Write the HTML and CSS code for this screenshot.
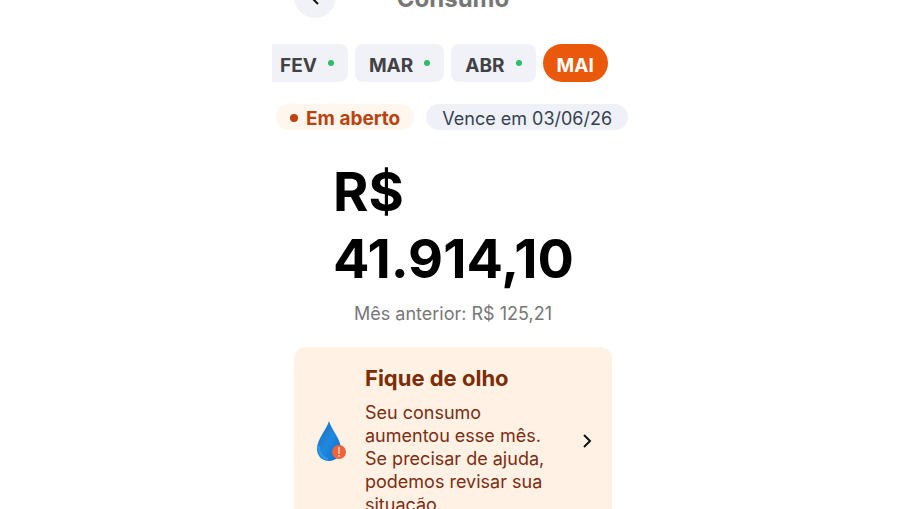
FILE: index.html
```
<!DOCTYPE html>
<html lang="pt-BR">
  <head>
    <meta charset="utf-8" />
    <meta name="viewport" content="width=device-width, initial-scale=1" />
    <title>Consumo</title>
    <link rel="stylesheet" href="styles.css">
  </head>
  <body>
    <main class="screen">
      <header class="header">
        <button class="back-btn" aria-label="Voltar">
          <svg width="20" height="20" viewBox="0 0 20 20" fill="none" stroke="#111" stroke-width="2">
            <path d="M13 3L6 10L13 17" />
          </svg>
        </button>
        <h1>Consumo</h1>
      </header>

      <nav class="months">
        <button class="month month-first">FEV <span class="dot"></span></button>
        <button class="month">MAR <span class="dot"></span></button>
        <button class="month">ABR <span class="dot"></span></button>
        <button class="month active">MAI</button>
      </nav>

      <div class="badges">
        <span class="badge badge-open"><span class="dot"></span>Em aberto</span>
        <span class="badge badge-due">Vence em 03/06/26</span>
      </div>

      <section class="bill">
        <p class="amount">R$<br>41.914,10</p>
        <p class="previous">Mês anterior: R$ 125,21</p>
      </section>

      <a class="alert-card" href="#">
        <svg class="drop" width="32" height="42" viewBox="0 0 32 42">
          <defs>
            <linearGradient id="water" x1="0" y1="0" x2="1" y2="1">
              <stop offset="0" stop-color="#1769b5" />
              <stop offset="0.5" stop-color="#2088de" />
              <stop offset="1" stop-color="#0b6ed0" />
            </linearGradient>
          </defs>
          <path d="M13 1C11 9 1 19 1 29C1 36 6 41 13 41C20 41 25 36 25 29C25 19 15 9 13 1Z" fill="url(#water)" />
          <path d="M3 27C3 33 6 37 11 39" fill="none" stroke="#2f9bea" stroke-width="2" stroke-linecap="round" />
          <circle cx="23" cy="32" r="7" fill="#ee6339" />
          <path d="M23 27V34M23 35V37" stroke="#fff" stroke-width="1" />
        </svg>
        <div class="alert-text">
          <h2>Fique de olho</h2>
          <p>Seu consumo<br>aumentou esse mês.<br>Se precisar de ajuda,<br>podemos revisar sua<br>situação.</p>
        </div>
        <svg class="chevron" width="10" height="14" viewBox="0 0 10 14" fill="none" stroke="#111" stroke-width="2">
          <path d="M2 1L8 7L2 13" />
        </svg>
      </a>
    </main>
  </body>
</html>
```
FILE: styles.css
```
* {
  box-sizing: border-box;
}
body {
  margin: 0;
  background: #fff;
  font-family: Inter, "Open Sans", sans-serif;
  overflow: hidden;
}
h1,
h2,
p {
  margin: 0;
}
button {
  border: none;
  font-family: inherit;
  cursor: pointer;
}
.screen {
  max-width: 362px;
  margin: 0 auto;
}
.header {
  display: grid;
  grid-template-columns: 42px 1fr 42px;
  align-items: center;
  margin-top: -24px;
  padding: 0 22px;
}
.header h1 {
  padding-top: 4px;
  font-size: 24px;
  line-height: 38px;
  text-align: center;
  color: #777;
}
.back-btn {
  display: flex;
  align-items: center;
  justify-content: center;
  height: 42px;
  padding: 0;
  border-radius: 50%;
  background: #f0f2f8;
}
.months {
  display: flex;
  gap: 7px;
  margin-top: 26px;
}
.month {
  display: flex;
  align-items: center;
  gap: 11px;
  height: 38px;
  padding: 4px 14px 0;
  border-radius: 8px;
  background: #f0f2f8;
  color: #414146;
  font-size: 19px;
  font-weight: 700;
}
.month-first {
  padding-left: 8px;
  border-radius: 0 8px 8px 0;
}
.month .dot {
  margin-bottom: 4px;
}
.month.active {
  border-radius: 19px;
  background: #ea580c;
  color: #fff;
}
.dot {
  width: 6px;
  height: 6px;
  border-radius: 50%;
  background: #2dbe68;
}
.badges {
  display: flex;
  gap: 12px;
  margin-top: 22px;
  padding: 0 4px;
}
.badge {
  display: flex;
  align-items: center;
  height: 26px;
  padding: 2px 14px 0;
  border-radius: 13px;
  font-size: 18px;
  white-space: nowrap;
}
.badge-open {
  gap: 8px;
  background: #fff6ed;
  color: #b9430f;
  font-size: 19px;
  font-weight: 700;
}
.badge-open .dot {
  width: 8px;
  height: 8px;
  background: #c2410c;
}
.badge-due {
  padding: 2px 16px 0;
  background: #eef1f7;
  color: #374151;
}
.amount {
  margin-top: 28px;
  padding-left: 61px;
  font-size: 54px;
  line-height: 67px;
  font-weight: 700;
  color: #000;
}
.previous {
  margin-top: 10px;
  font-size: 18px;
  line-height: 24px;
  text-align: center;
  color: #777;
}
.alert-card {
  display: flex;
  align-items: center;
  margin: 21px 22px 0;
  padding: 18px 20px 6px 22px;
  border-radius: 12px;
  background: #fff1e4;
  color: #7c2d12;
  text-decoration: none;
}
.alert-text {
  flex: 1;
  margin-left: 17px;
}
.alert-text h2 {
  margin-bottom: 10px;
  font-size: 22px;
  line-height: 26px;
  color: #7c2d06;
}
.alert-text p {
  font-size: 18px;
  line-height: 23px;
  white-space: nowrap;
}
```
